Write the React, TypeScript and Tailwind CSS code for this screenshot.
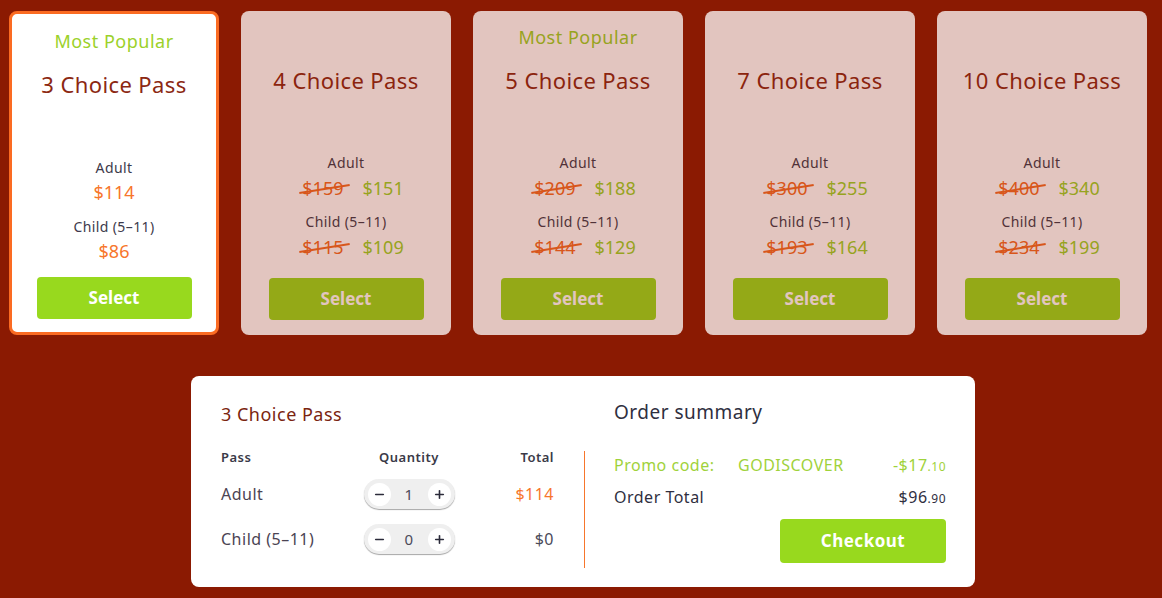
import { Minus, Plus } from 'lucide-react';

type Pass = {
    id: string;
    title: string;
    popular?: boolean;
    selected?: boolean;
    adult: { price: number; was?: number };
    child: { price: number; was?: number };
};

const passes: Pass[] = [
    { id: 'p3', title: '3 Choice Pass', popular: true, selected: true, adult: { price: 114 }, child: { price: 86 } },
    { id: 'p4', title: '4 Choice Pass', adult: { price: 151, was: 159 }, child: { price: 109, was: 115 } },
    { id: 'p5', title: '5 Choice Pass', popular: true, adult: { price: 188, was: 209 }, child: { price: 129, was: 144 } },
    { id: 'p7', title: '7 Choice Pass', adult: { price: 255, was: 300 }, child: { price: 164, was: 193 } },
    { id: 'p10', title: '10 Choice Pass', adult: { price: 340, was: 400 }, child: { price: 199, was: 234 } },
];

const font = { fontFamily: '"Noto Sans", "Open Sans", sans-serif' };

function PriceLine({ price, was }: { price: number; was?: number }) {
    if (!was) {
        return <div className="h-[24px] leading-[24px] text-[18px] text-[#f7762c]">${price}</div>;
    }
    return (
        <div className="flex items-center gap-[19px] pl-[14px] h-[26px] leading-[26px] text-[18px]">
            <span className="relative text-[#f26a24]">
                ${was}
                <span className="absolute left-[-3px] right-[-7px] top-[13px] h-[2px] bg-[#f26a24] -rotate-[9deg]" />
            </span>
            <span className="text-[#9bd12a]">${price}</span>
        </div>
    );
}

function PassCard({ pass }: { pass: Pass }) {
    const sel = pass.selected;
    return (
        <div
            className={`w-[210px] h-[324px] rounded-[8px] bg-white flex flex-col items-center ${
                sel ? 'border-[3px] border-[#fb6b22] pt-[15px] pb-[13px]' : 'opacity-75 pt-[14px] pb-[15px]'
            }`}
        >
            <div className="h-[24px] leading-[24px] text-[18px] tracking-[0.5px] text-[#9bd12a]">
                {pass.popular ? 'Most Popular' : ''}
            </div>
            <div className="mt-[16px] h-[30px] leading-[30px] text-[22px] tracking-[0.4px] text-[#8c2812]">{pass.title}</div>
            <div className="flex-1" />
            <div className="flex flex-col items-center">
                <div className="h-[20px] leading-[20px] text-[14px] tracking-[0.4px] text-[#3d3a4b] mb-[2px]">Adult</div>
                <PriceLine {...pass.adult} />
                <div
                    className={`h-[20px] leading-[20px] text-[14px] tracking-[0.4px] text-[#3d3a4b] mb-[2px] ${
                        sel ? 'mt-[13px]' : 'mt-[11px]'
                    }`}
                >
                    Child (5–11)
                </div>
                <PriceLine {...pass.child} />
            </div>
            <button
                className={`w-[155px] h-[42px] rounded-[4px] bg-[#98d91e] text-white font-bold text-[17px] ${
                    sel ? 'mt-[14px]' : 'mt-[18px]'
                }`}
            >
                Select
            </button>
        </div>
    );
}

function Stepper({ value }: { value: number }) {
    return (
        <div className="w-[91px] h-[30px] rounded-full bg-[#efefef] shadow-[0_1px_1px_rgba(0,0,0,0.35)] flex items-center justify-between px-[4px]">
            <span className="w-[23px] h-[23px] rounded-full bg-white flex items-center justify-center">
                <Minus className="w-[13px] h-[13px] text-[#2b2b3a]" strokeWidth={3} />
            </span>
            <span className="text-[15px] text-[#4b4b5a]">{value}</span>
            <span className="w-[23px] h-[23px] rounded-full bg-white flex items-center justify-center">
                <Plus className="w-[13px] h-[13px] text-[#2b2b3a]" strokeWidth={3} />
            </span>
        </div>
    );
}

export default function App() {
    return (
        <div className="w-[1162px] h-[598px] bg-[#8b1a02] overflow-hidden" style={font}>
            {/* Pass cards */}
            <div className="flex gap-[22px] pl-[9px] pt-[11px]">
                {passes.map((p) => (
                    <PassCard key={p.id} pass={p} />
                ))}
            </div>

            {/* Order panel */}
            <div className="mt-[41px] ml-[191px] w-[784px] h-[211px] bg-white rounded-[8px] flex pl-[30px] pr-[29px] tracking-[0.5px]">
                <div className="w-[333px] shrink-0 pt-[26px]">
                    <div className="h-[24px] leading-[24px] text-[18px] text-[#7a2410]">3 Choice Pass</div>
                    <div className="mt-[22px] grid grid-cols-[118px_140px_1fr] items-center text-[13px] font-semibold text-[#3a3a48] h-[20px]">
                        <span>Pass</span>
                        <span className="text-center">Quantity</span>
                        <span className="text-right">Total</span>
                    </div>
                    <div className="mt-[10px] grid grid-cols-[118px_140px_1fr] items-center h-[32px] text-[16px]">
                        <span className="text-[#4b4453] whitespace-nowrap">Adult</span>
                        <span className="flex justify-center"><Stepper value={1} /></span>
                        <span className="text-right text-[#f7762c]">$114</span>
                    </div>
                    <div className="mt-[13px] grid grid-cols-[118px_140px_1fr] items-center h-[32px] text-[16px]">
                        <span className="text-[#4b4453] whitespace-nowrap">Child (5–11)</span>
                        <span className="flex justify-center"><Stepper value={0} /></span>
                        <span className="text-right text-[#4b4b5a]">$0</span>
                    </div>
                </div>
                <div className="ml-[30px] mt-[75px] w-px h-[117px] shrink-0 bg-[#f7762c]" />
                <div className="ml-[29px] flex-1 pt-[24px] flex flex-col">
                    <div className="h-[24px] leading-[24px] text-[19px] text-[#2f2f3f]">Order summary</div>
                    <div className="mt-[31px] flex items-center h-[20px] text-[16px] text-[#9fd23b]">
                        <span className="w-[124px]">Promo code:</span>
                        <span>GODISCOVER</span>
                        <span className="ml-auto">-$17<span className="text-[12px]">.10</span></span>
                    </div>
                    <div className="mt-[12px] flex items-center h-[20px] text-[16px] text-[#2f2f3f]">
                        <span>Order Total</span>
                        <span className="ml-auto">$96<span className="text-[12px]">.90</span></span>
                    </div>
                    <button className="mt-[12px] ml-auto w-[166px] h-[44px] rounded-[4px] bg-[#98d91e] text-white font-bold text-[17px]">
                        Checkout
                    </button>
                </div>
            </div>
        </div>
    );
}
